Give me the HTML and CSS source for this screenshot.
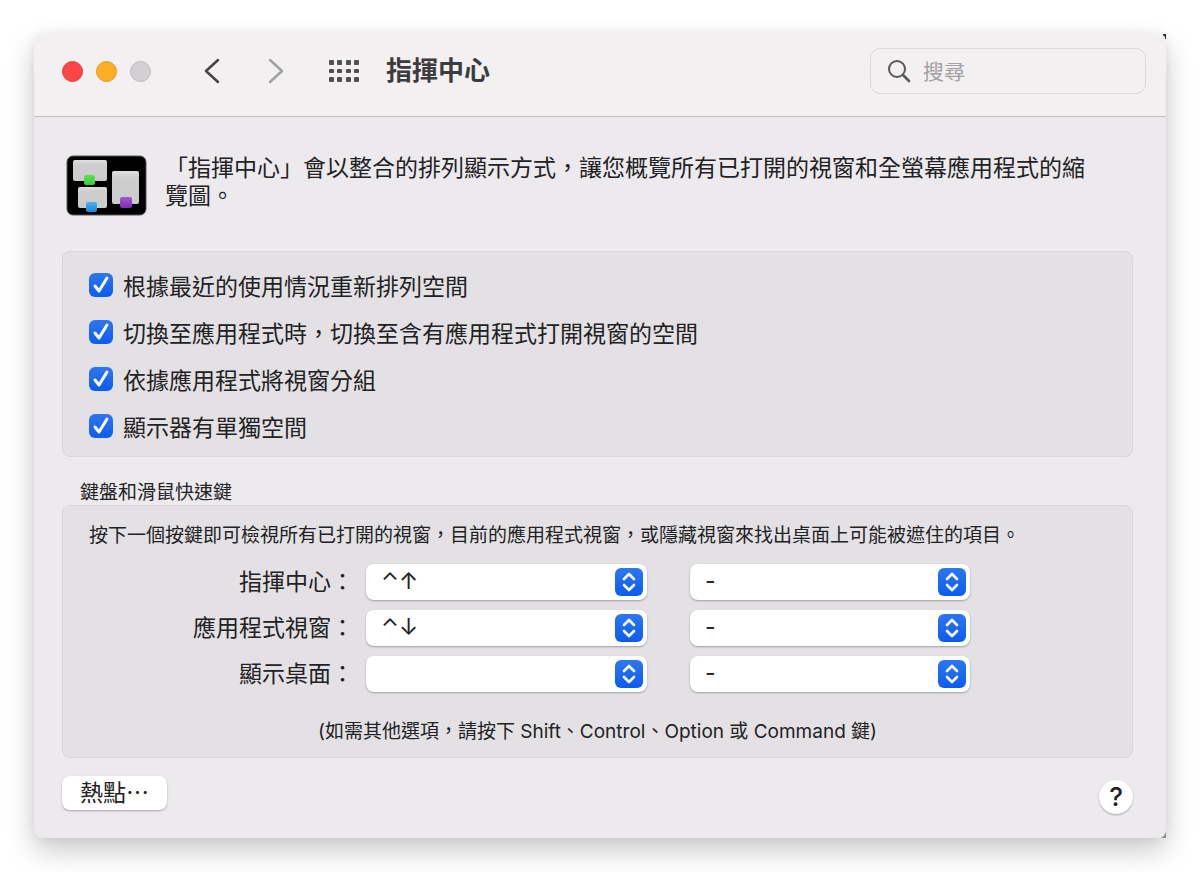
FILE: index.html
```html
<!DOCTYPE html>
<html lang="zh-Hant">
<head>
<meta charset="utf-8">
<meta name="viewport" content="width=device-width, initial-scale=1">
<title>指揮中心</title>
<link rel="stylesheet" href="styles.css">
</head>
<body>
<main class="window">
  <svg class="corner corner-top" viewBox="0 0 4 5" aria-hidden="true"><path d="M1 0h3v5H3V3L1 1z" fill="#2a2a2a"/></svg>
  <svg class="corner corner-bottom" viewBox="0 0 5 6" aria-hidden="true"><path d="M5 0v6H0l3-2z" fill="#8d8c8e"/></svg>

  <header class="toolbar">
    <div class="lights">
      <button class="light light-close" aria-label="關閉"></button>
      <button class="light light-min" aria-label="縮到最小"></button>
      <button class="light light-off" aria-label="縮放" disabled></button>
    </div>
    <div class="nav">
      <button class="icon-button" aria-label="返回">
        <svg width="16" height="26" viewBox="0 0 16 26"><path d="M14 2 2 13l12 11" fill="none" stroke="#454446" stroke-width="2.5" stroke-linecap="round" stroke-linejoin="round"/></svg>
      </button>
      <button class="icon-button" aria-label="前進">
        <svg width="16" height="26" viewBox="0 0 16 26"><path d="m2 2 12 11L2 24" fill="none" stroke="#a2a1a3" stroke-width="2.5" stroke-linecap="round" stroke-linejoin="round"/></svg>
      </button>
    </div>
    <button class="icon-button show-all" aria-label="顯示全部">
      <svg width="32" height="24" viewBox="0 0 32 24" fill="#504f51">
        <rect x="1" y="1" width="5" height="5" rx="1"/><rect x="9" y="1" width="5" height="5" rx="1"/><rect x="18" y="1" width="5" height="5" rx="1"/><rect x="26" y="1" width="5" height="5" rx="1"/>
        <rect x="1" y="10" width="5" height="4" rx="1"/><rect x="9" y="10" width="5" height="4" rx="1"/><rect x="18" y="10" width="5" height="4" rx="1"/><rect x="26" y="10" width="5" height="4" rx="1"/>
        <rect x="1" y="18" width="5" height="5" rx="1"/><rect x="9" y="18" width="5" height="5" rx="1"/><rect x="18" y="18" width="5" height="5" rx="1"/><rect x="26" y="18" width="5" height="5" rx="1"/>
      </svg>
    </button>
    <h1 class="title">指揮中心</h1>
    <label class="search">
      <svg width="24" height="24" viewBox="0 0 24 24" fill="none" stroke="#59585a" stroke-linecap="round"><circle cx="10" cy="10" r="8" stroke-width="2"/><path d="m16 16 6 6" stroke-width="2.7"/></svg>
      <input class="search-input" type="search" placeholder="搜尋" aria-label="搜尋">
    </label>
  </header>

  <div class="content">
    <section class="intro">
      <svg class="intro-icon" width="81" height="61" viewBox="0 0 81 61" aria-hidden="true">
        <defs>
          <linearGradient id="pane" x2="0" y2="1"><stop offset="0" stop-color="#dfdfdf"/><stop offset=".2" stop-color="#cecece"/><stop offset="1" stop-color="#cbcbcb"/></linearGradient>
          <linearGradient id="green" x2="0" y2="1"><stop offset="0" stop-color="#5edc55"/><stop offset="1" stop-color="#36cf35"/></linearGradient>
          <linearGradient id="blue" x2="0" y2="1"><stop offset="0" stop-color="#4cb0ec"/><stop offset="1" stop-color="#1587e2"/></linearGradient>
          <linearGradient id="purple" x2="0" y2="1"><stop offset="0" stop-color="#a257cf"/><stop offset="1" stop-color="#7b2fb8"/></linearGradient>
        </defs>
        <rect x="1" y="1" width="79" height="59" rx="6" fill="#000" stroke="#555" stroke-width="1"/>
        <rect x="7" y="5" width="34" height="21" rx="2" fill="url(#pane)"/>
        <rect x="12" y="32" width="29" height="21" rx="2" fill="url(#pane)"/>
        <rect x="46" y="16" width="27" height="33" rx="2" fill="url(#pane)"/>
        <rect x="18" y="20" width="11" height="10" rx="2" fill="url(#green)"/>
        <rect x="20" y="47" width="11" height="10" rx="2" fill="url(#blue)"/>
        <rect x="54" y="42" width="12" height="11" rx="2" fill="url(#purple)"/>
      </svg>
      <p class="intro-text">「指揮中心」會以整合的排列顯示方式，讓您概覽所有已打開的視窗和全螢幕應用程式的縮覽圖。</p>
    </section>

    <section class="group options">
      <label class="option"><input class="check" type="checkbox" checked>根據最近的使用情況重新排列空間</label>
      <label class="option"><input class="check" type="checkbox" checked>切換至應用程式時，切換至含有應用程式打開視窗的空間</label>
      <label class="option"><input class="check" type="checkbox" checked>依據應用程式將視窗分組</label>
      <label class="option"><input class="check" type="checkbox" checked>顯示器有單獨空間</label>
    </section>

    <h2 class="section-title">鍵盤和滑鼠快速鍵</h2>
    <section class="group shortcuts">
      <p class="note">按下一個按鍵即可檢視所有已打開的視窗，目前的應用程式視窗，或隱藏視窗來找出桌面上可能被遮住的項目。</p>
      <div class="form">
        <label class="form-label" for="mission-key">指揮中心：</label>
        <div class="popup">
          <select class="select" id="mission-key"><option>⌃↑</option></select>
          <svg class="stepper" viewBox="0 0 28 28" aria-hidden="true"><path d="m9 11 5-5 5 5M9 17l5 5 5-5"/></svg>
        </div>
        <div class="popup popup-mouse">
          <select class="select" aria-label="指揮中心滑鼠快速鍵"><option>-</option></select>
          <svg class="stepper" viewBox="0 0 28 28" aria-hidden="true"><path d="m9 11 5-5 5 5M9 17l5 5 5-5"/></svg>
        </div>
        <label class="form-label" for="app-key">應用程式視窗：</label>
        <div class="popup">
          <select class="select" id="app-key"><option>⌃↓</option></select>
          <svg class="stepper" viewBox="0 0 28 28" aria-hidden="true"><path d="m9 11 5-5 5 5M9 17l5 5 5-5"/></svg>
        </div>
        <div class="popup popup-mouse">
          <select class="select" aria-label="應用程式視窗滑鼠快速鍵"><option>-</option></select>
          <svg class="stepper" viewBox="0 0 28 28" aria-hidden="true"><path d="m9 11 5-5 5 5M9 17l5 5 5-5"/></svg>
        </div>
        <label class="form-label" for="desktop-key">顯示桌面：</label>
        <div class="popup">
          <select class="select" id="desktop-key"><option></option></select>
          <svg class="stepper" viewBox="0 0 28 28" aria-hidden="true"><path d="m9 11 5-5 5 5M9 17l5 5 5-5"/></svg>
        </div>
        <div class="popup popup-mouse">
          <select class="select" aria-label="顯示桌面滑鼠快速鍵"><option>-</option></select>
          <svg class="stepper" viewBox="0 0 28 28" aria-hidden="true"><path d="m9 11 5-5 5 5M9 17l5 5 5-5"/></svg>
        </div>
      </div>
      <p class="note hint">(如需其他選項，請按下 Shift、Control、Option 或 Command 鍵)</p>
    </section>

    <footer class="footer">
      <button class="button">熱點⋯</button>
      <button class="help" aria-label="輔助說明">?</button>
    </footer>
  </div>
</main>
</body>
</html>
```

FILE: styles.css
```css
* {
  box-sizing: border-box;
}

body {
  margin: 0;
  padding: 34px;
  background: #fff;
  color: #222123;
  font-family: Inter, "Noto Sans CJK TC", sans-serif;
  font-size: 23px;
}

button,
input,
select {
  font: inherit;
  color: inherit;
}

h1,
h2,
p {
  margin: 0;
}

.window {
  position: relative;
  border-radius: 8px;
  background: #eceaed;
  box-shadow: 0 12px 28px rgba(0, 0, 0, 0.22), 0 0 10px rgba(0, 0, 0, 0.06);
}

.corner {
  position: absolute;
  right: 0;
}

.corner-top {
  top: 0;
  width: 4px;
  height: 5px;
}

.corner-bottom {
  bottom: 0;
  width: 5px;
  height: 6px;
}

.toolbar {
  display: flex;
  align-items: center;
  height: 83px;
  padding: 0 20px 8px 28px;
  border-bottom: 1px solid #c1bfc2;
  border-radius: 8px 8px 0 0;
  background: #f2f0f1;
}

.lights {
  display: flex;
  gap: 13px;
}

.light {
  width: 21px;
  height: 21px;
  padding: 0;
  border: 1px solid #e23c3c;
  border-radius: 50%;
  background: #fc4646;
}

.light-min {
  border-color: #e59a1c;
  background: #fdae24;
}

.light-off {
  border-color: #bab8bb;
  background: #d2d0d3;
}

.nav {
  display: flex;
  gap: 48px;
  margin-left: 53px;
}

.icon-button {
  display: flex;
  padding: 0;
  border: 0;
  background: none;
}

.show-all {
  margin-left: 44px;
}

.title {
  margin-left: 26px;
  font-size: 26px;
  font-weight: 700;
  line-height: 32px;
  color: #3c3b3d;
}

.search {
  display: flex;
  align-items: center;
  gap: 12px;
  width: 276px;
  height: 46px;
  margin-left: auto;
  padding: 0 16px;
  border: 1px solid #dbd9da;
  border-radius: 10px;
}

.search-input {
  flex: 1;
  min-width: 0;
  padding: 0;
  border: 0;
  outline: 0;
  background: none;
  font-size: 21px;
}

.search-input::placeholder {
  color: #a3a1a4;
}

.content {
  padding: 37px 33px 24px 28px;
}

.intro {
  display: flex;
  gap: 18px;
  padding: 0 36px 0 4px;
}

.intro-icon {
  flex: none;
  margin-top: 1px;
}

.intro-text {
  line-height: 28px;
}

.group {
  border: 1px solid #d7d5d8;
  border-radius: 8px;
  background: #e3e1e4;
}

.options {
  display: flex;
  flex-direction: column;
  align-items: flex-start;
  margin-top: 35px;
  padding: 9px 26px 7px;
}

.option {
  display: flex;
  align-items: center;
  gap: 10px;
  height: 47px;
}

.check {
  appearance: none;
  width: 24px;
  height: 24px;
  margin: 0;
  border-radius: 6px;
  background: url('data:image/svg+xml,<svg xmlns="http://www.w3.org/2000/svg" viewBox="0 0 24 24"><path d="m6 13 4 5 8-13" fill="none" stroke="white" stroke-width="3" stroke-linecap="round" stroke-linejoin="round"/></svg>'), linear-gradient(#2d77ee, #0b5cf0);
}

.section-title {
  margin: 24px 0 0;
  padding-left: 18px;
  font-size: 19px;
  font-weight: 400;
  line-height: 24px;
}

.shortcuts {
  padding: 18px 26px 13px;
}

.note {
  font-size: 19px;
  line-height: 24px;
}

.form {
  display: grid;
  grid-template-columns: 265fr 281fr 311fr 124fr;
  gap: 10px 12px;
  margin: 16px 0 28px;
}

.form-label {
  grid-column: 1;
  line-height: 36px;
  text-align: right;
}

.popup {
  position: relative;
}

.popup-mouse {
  margin-left: 31px;
}

.select {
  appearance: none;
  display: block;
  width: 100%;
  height: 36px;
  padding: 0 40px 2px 15px;
  border: 0;
  border-radius: 8px;
  background: #fff;
  box-shadow: 0 1px 2px rgba(0, 0, 0, 0.3);
}

.stepper {
  position: absolute;
  top: 4px;
  right: 4px;
  width: 28px;
  height: 28px;
  border-radius: 6px;
  background: linear-gradient(#2d77ee, #0b5cf0);
  fill: none;
  stroke: #fff;
  stroke-width: 2.6;
  stroke-linecap: round;
  stroke-linejoin: round;
  pointer-events: none;
}

.hint {
  text-align: center;
}

.footer {
  display: flex;
  align-items: flex-start;
  justify-content: space-between;
  margin-top: 18px;
}

.button {
  height: 34px;
  padding: 0 18px;
  border: 0;
  border-radius: 8px;
  background: #fff;
  line-height: 32px;
  box-shadow: 0 1px 2px rgba(0, 0, 0, 0.3);
}

.help {
  width: 34px;
  height: 34px;
  margin-top: 4px;
  padding: 0;
  border: 0;
  border-radius: 50%;
  background: #fff;
  font-size: 26px;
  font-weight: 500;
  line-height: 34px;
  box-shadow: 0 1px 2px rgba(0, 0, 0, 0.3);
}
```
